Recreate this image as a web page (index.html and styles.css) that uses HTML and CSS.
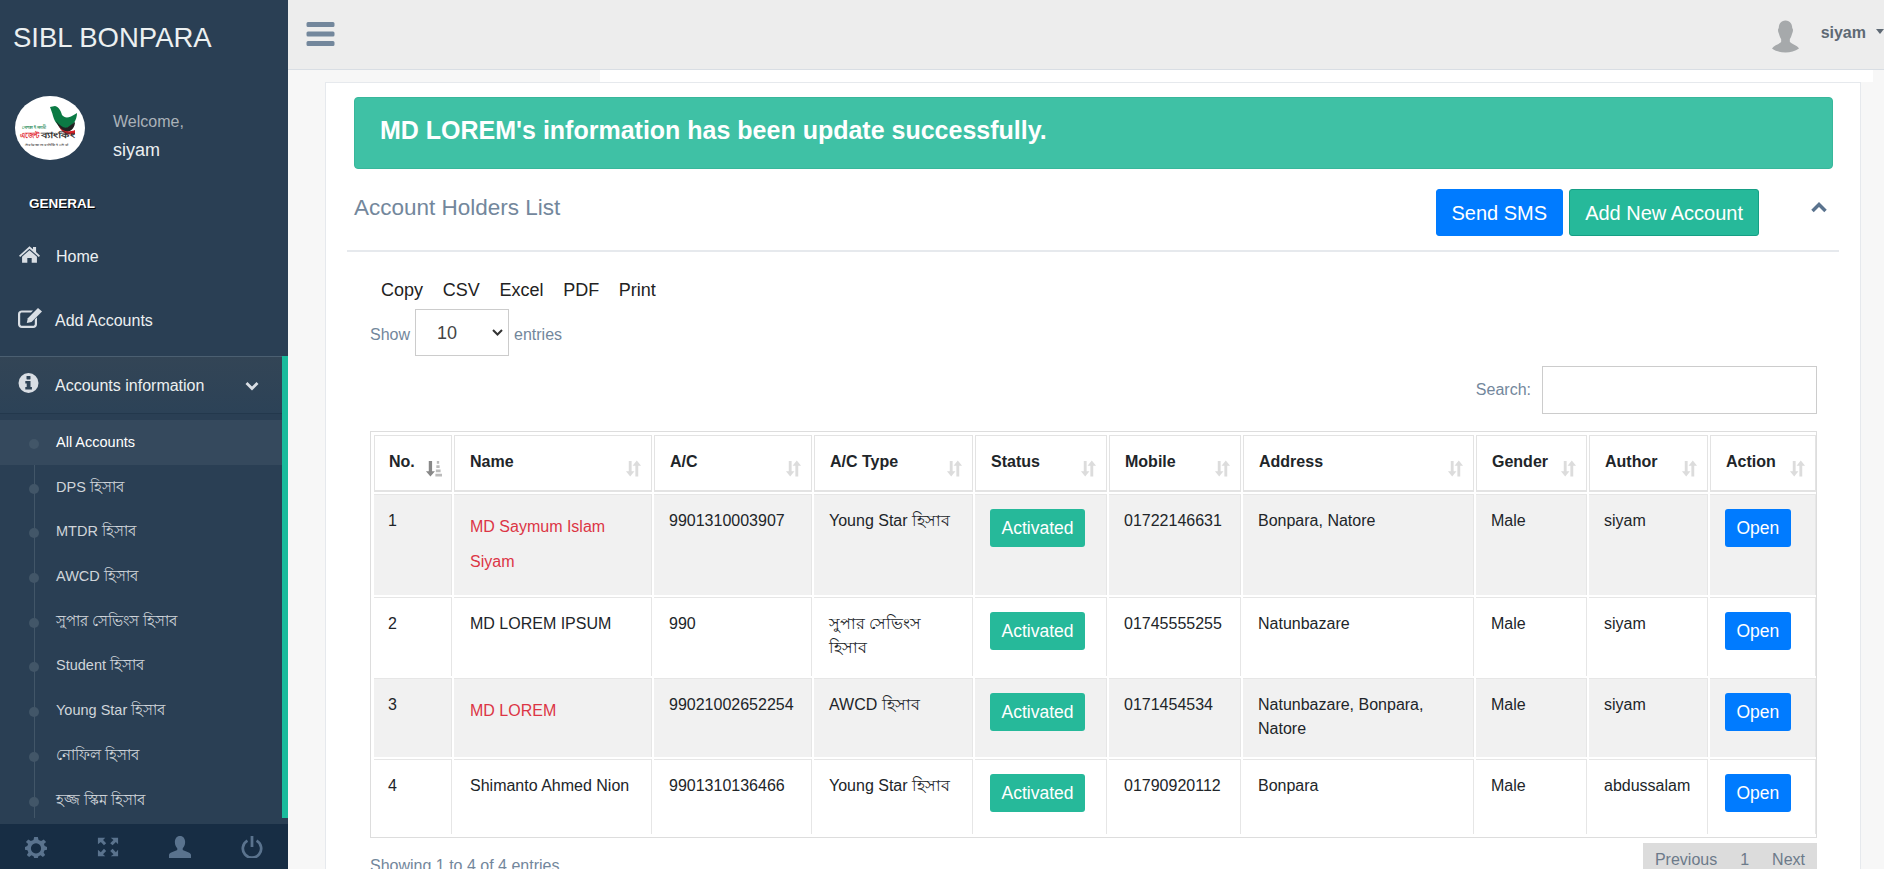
FILE: index.html
```html
<!DOCTYPE html>
<html lang="en">
<head>
    <meta charset="UTF-8">
    <meta name="viewport" content="width=device-width, initial-scale=1.0">
    <title>Account Holders List</title>
    <link rel="stylesheet" href="styles.css">
</head>
<body>

    <aside class="sidebar">
        <div class="brand">SIBL BONPARA</div>
        <div class="profile">
            <svg class="logo" viewBox="0 0 70 64">
                <ellipse cx="35" cy="32" rx="35" ry="32" fill="#fff"/>
                <path d="M35 11 L40 10 C44 11 46 15 47 19 C50 22 53 23 62 17 C62 24 58 30 52 32 C46 33 40 28 38 20 C37 16 36 14 35 11Z" fill="#0b7a44"/>
                <path d="M41 25 C46 31 50 33 53 31 L60 26 C60 31 57 35 52 36 C47 36 44 32 41 25Z" fill="#222"/>
                <path d="M44 30 C47 35 52 37 60 34 L60 38 C52 40 47 37 44 30Z" fill="#d32027"/>
                <text class="logo-top" x="7" y="33" textLength="24" lengthAdjust="spacingAndGlyphs">সোশ্যাল ইসলামী</text>
                <text class="logo-red" x="5" y="42" textLength="19" lengthAdjust="spacingAndGlyphs">এজেন্ট</text>
                <text class="logo-black" x="26" y="42" textLength="33" lengthAdjust="spacingAndGlyphs">ব্যাংকিং</text>
                <text class="logo-small" x="10" y="50" textLength="43" lengthAdjust="spacingAndGlyphs">সবার জন্য ব্যাংকিং সেবা</text>
            </svg>
            <div class="profile-info">
                <span class="welcome">Welcome,</span>
                <span class="profile-name">siyam</span>
            </div>
        </div>
        <h3 class="menu-title">GENERAL</h3>
        <a class="menu-item" href="#">
            <svg class="menu-icon" viewBox="0 0 24 20"><path d="M12 1 L16 4.6 V2 H19.5 V7.8 L24 12 L22.6 13.4 L12 3.9 L1.4 13.4 L0 12Z M12 5.6 L20.5 13 V20 H14.5 V14.5 H9.5 V20 H3.5 V13Z" fill="#d9dee4"/></svg>
            Home
        </a>
        <a class="menu-item add-item" href="#">
            <svg class="menu-icon wide" viewBox="0 0 24 20"><path d="M4 2.5 H15 L13 4.5 H4 C3 4.5 2.2 5.2 2.2 6.2 V16 C2.2 17 3 17.8 4 17.8 H15 C16 17.8 16.8 17 16.8 16 V11.5 L19 9.3 V16.2 C19 18.2 17.5 20 15.2 20 H3.8 C1.7 20 0 18.2 0 16.2 V6 C0 4 1.7 2.5 4 2.5Z" fill="#d9dee4"/><path d="M20 0 L24 3.6 L13.5 14 L8.8 15 L9.8 10.2Z" fill="#d9dee4"/></svg>
            Add Accounts
        </a>
        <div class="menu-section">
            <a class="section-head" href="#">
                <svg class="menu-icon" viewBox="0 0 20 20"><circle cx="10" cy="10" r="10" fill="#d9dee4"/><rect x="8" y="3" width="4" height="3.4" rx=".6" fill="#2f4356"/><path d="M6.8 8 H12 V14 H13.4 V16.6 H6.8 V14 H8.2 V10.6 H6.8Z" fill="#2f4356"/></svg>
                <span class="section-name">Accounts information</span>
                <svg class="section-chevron" viewBox="0 0 14 10"><path d="M1.5 2 L7 7.5 L12.5 2" fill="none" stroke="#d9dee4" stroke-width="2.8"/></svg>
            </a>
            <ul class="submenu">
                <li class="current"><a href="#">All Accounts</a></li>
                <li><a href="#">DPS হিসাব</a></li>
                <li><a href="#">MTDR হিসাব</a></li>
                <li><a href="#">AWCD হিসাব</a></li>
                <li><a href="#">সুপার সেভিংস হিসাব</a></li>
                <li><a href="#">Student হিসাব</a></li>
                <li><a href="#">Young Star হিসাব</a></li>
                <li><a href="#">নোফিল হিসাব</a></li>
                <li><a href="#">হজ্জ স্কিম হিসাব</a></li>
            </ul>
        </div>
        <div class="sidebar-footer">
            <svg viewBox="0 0 24 24"><path d="M10 1 H14 L14.8 4.3 L17.6 5.5 L20.5 3.7 L23 6.5 L20.6 8.8 L21.5 11 L24 12 V15 L21.3 15.6 L20.3 18 L22 20.6 L19.5 23 L17 21 L14.6 22 L14 24 H10 L9.3 22 L7 21 L4.5 23 L2 20.6 L3.7 18 L2.7 15.6 L0 15 V12 L2.5 11 L3.4 8.8 L1 6.5 L3.5 3.7 L6.4 5.5 L9.2 4.3Z M12 8 A5.5 5.5 0 1 0 12.01 8Z" fill="#5a738e" fill-rule="evenodd"/></svg>
            <svg viewBox="0 0 24 24"><path d="M1 2 H9 L6.6 4.4 L10 7.8 L7.6 10 L4.2 6.6 L1 9Z M23 2 V9 L20.6 6.6 L17 10 L14.4 7.8 L18 4.4 L15 2Z M1 22 V15 L4.2 17.6 L7.6 14 L10 16.4 L6.6 19.8 L9 22Z M23 22 H15 L18 19.8 L14.4 16.4 L17 14 L20.6 17.6 L23 15Z" fill="#5a738e"/></svg>
            <svg viewBox="0 0 24 24"><path d="M12 0 C15.6 0 17.6 3 17.6 6.6 C17.6 9.4 16.6 12 15 13.4 V15.4 C18 17 23 17.6 24 20.4 V24 H0 V20.4 C1 17.6 6 17 9 15.4 V13.4 C7.4 12 6.4 9.4 6.4 6.6 C6.4 3 8.4 0 12 0Z" fill="#5a738e"/></svg>
            <svg viewBox="0 0 24 24"><path d="M7 5 A10 10 0 1 0 17 5" fill="none" stroke="#5a738e" stroke-width="3"/><rect x="10.5" y="0" width="3" height="12" fill="#5a738e"/></svg>
        </div>
    </aside>

    <div class="main">
        <header class="topbar">
            <svg class="hamburger" viewBox="0 0 28 24"><path d="M1.5 0 H26.5 A1.5 1.5 0 0 1 28 1.5 V3.5 A1.5 1.5 0 0 1 26.5 5 H1.5 A1.5 1.5 0 0 1 0 3.5 V1.5 A1.5 1.5 0 0 1 1.5 0Z M1.5 9.5 H26.5 A1.5 1.5 0 0 1 28 11 V13 A1.5 1.5 0 0 1 26.5 14.5 H1.5 A1.5 1.5 0 0 1 0 13 V11 A1.5 1.5 0 0 1 1.5 9.5Z M1.5 19 H26.5 A1.5 1.5 0 0 1 28 20.5 V22.5 A1.5 1.5 0 0 1 26.5 24 H1.5 A1.5 1.5 0 0 1 0 22.5 V20.5 A1.5 1.5 0 0 1 1.5 19Z" fill="#73879c"/></svg>
            <div class="user-menu">
                <svg class="avatar" viewBox="0 0 28 33"><path d="M14 0 C19 0 21 4 21 8 C22 8.500 22 11 21 13 C20.400 15 19.500 18 18.500 19 V22 C20 24.500 26 25.500 28 29 C24 32 19 33 14 33 C9 33 4 32 0 29 C2 25.500 8 24.500 9.500 22 V19 C8.500 18 7.600 15 7 13 C6 11 6 8.500 7 8 C7 4 9 0 14 0Z" fill="#a6a9ab"/></svg>
                <span class="user-name">siyam</span>
                <span class="caret"></span>
            </div>
        </header>

        <div class="content">
            <section class="panel">
                <div class="alert">MD LOREM's information has been update successfully.</div>
                <div class="panel-title">
                    <h2>Account Holders List</h2>
                    <div class="title-actions">
                        <a class="btn btn-blue" href="#">Send SMS</a>
                        <a class="btn btn-green" href="#">Add New Account</a>
                    </div>
                    <svg class="collapse" viewBox="0 0 16 11"><path d="M1.500 9 L8 2.500 L14.500 9" fill="none" stroke="#5a738e" stroke-width="3.500"/></svg>
                </div>

                <div class="table-area">
                    <div class="export-buttons">
                        <a href="#">Copy</a>
                        <a href="#">CSV</a>
                        <a href="#">Excel</a>
                        <a href="#">PDF</a>
                        <a href="#">Print</a>
                    </div>
                    <div class="length-row">
                        <span>Show</span>
                        <select class="length-select"><option>10</option></select>
                        <span>entries</span>
                    </div>
                    <div class="search-row">
                        <label for="search">Search:</label>
                        <input type="text" id="search">
                    </div>

                    <div class="table-wrap">
                        <table class="accounts">
                            <thead>
                                <tr>
                                    <th class="col-no">No.<svg class="sort active" viewBox="0 0 18 18"><path d="M4 1 H7.500 V12 H10.500 L5.750 17.500 L1 12 H4Z" fill="#888"/><path d="M12.500 1 H15 V4 H12.500Z M12 5.500 H15.500 V8.500 H12Z M11.500 10 H16.500 V13 H11.500Z M11 14.500 H18 V17.500 H11Z" fill="#bbb"/></svg></th>
                                    <th class="col-name">Name<svg class="sort" viewBox="0 0 18 18"><path d="M4 1 H7 V12 H10 L5.500 17.500 L1 12 H4Z M11 17.500 H14 V6 H17 L12.500 .5 L8 6 H11Z" fill="#dcdcdc"/></svg></th>
                                    <th class="col-ac">A/C<svg class="sort" viewBox="0 0 18 18"><path d="M4 1 H7 V12 H10 L5.500 17.500 L1 12 H4Z M11 17.500 H14 V6 H17 L12.500 .5 L8 6 H11Z" fill="#dcdcdc"/></svg></th>
                                    <th class="col-type">A/C Type<svg class="sort" viewBox="0 0 18 18"><path d="M4 1 H7 V12 H10 L5.500 17.500 L1 12 H4Z M11 17.500 H14 V6 H17 L12.500 .5 L8 6 H11Z" fill="#dcdcdc"/></svg></th>
                                    <th class="col-status">Status<svg class="sort" viewBox="0 0 18 18"><path d="M4 1 H7 V12 H10 L5.500 17.500 L1 12 H4Z M11 17.500 H14 V6 H17 L12.500 .5 L8 6 H11Z" fill="#dcdcdc"/></svg></th>
                                    <th class="col-mobile">Mobile<svg class="sort" viewBox="0 0 18 18"><path d="M4 1 H7 V12 H10 L5.500 17.500 L1 12 H4Z M11 17.500 H14 V6 H17 L12.500 .5 L8 6 H11Z" fill="#dcdcdc"/></svg></th>
                                    <th class="col-address">Address<svg class="sort" viewBox="0 0 18 18"><path d="M4 1 H7 V12 H10 L5.500 17.500 L1 12 H4Z M11 17.500 H14 V6 H17 L12.500 .5 L8 6 H11Z" fill="#dcdcdc"/></svg></th>
                                    <th class="col-gender">Gender<svg class="sort" viewBox="0 0 18 18"><path d="M4 1 H7 V12 H10 L5.500 17.500 L1 12 H4Z M11 17.500 H14 V6 H17 L12.500 .5 L8 6 H11Z" fill="#dcdcdc"/></svg></th>
                                    <th class="col-author">Author<svg class="sort" viewBox="0 0 18 18"><path d="M4 1 H7 V12 H10 L5.500 17.500 L1 12 H4Z M11 17.500 H14 V6 H17 L12.500 .5 L8 6 H11Z" fill="#dcdcdc"/></svg></th>
                                    <th class="col-action">Action<svg class="sort" viewBox="0 0 18 18"><path d="M4 1 H7 V12 H10 L5.500 17.500 L1 12 H4Z M11 17.500 H14 V6 H17 L12.500 .5 L8 6 H11Z" fill="#dcdcdc"/></svg></th>
                                </tr>
                            </thead>
                            <tbody>
                                <tr class="odd row-one">
                                    <td>1</td>
                                    <td class="holder flagged">MD Saymum Islam Siyam</td>
                                    <td>9901310003907</td>
                                    <td>Young Star হিসাব</td>
                                    <td><a class="btn-small btn-green" href="#">Activated</a></td>
                                    <td>01722146631</td>
                                    <td>Bonpara, Natore</td>
                                    <td>Male</td>
                                    <td>siyam</td>
                                    <td><a class="btn-small btn-blue" href="#">Open</a></td>
                                </tr>
                                <tr class="row-two">
                                    <td>2</td>
                                    <td>MD LOREM IPSUM</td>
                                    <td>990</td>
                                    <td>সুপার সেভিংস হিসাব</td>
                                    <td><a class="btn-small btn-green" href="#">Activated</a></td>
                                    <td>01745555255</td>
                                    <td>Natunbazare</td>
                                    <td>Male</td>
                                    <td>siyam</td>
                                    <td><a class="btn-small btn-blue" href="#">Open</a></td>
                                </tr>
                                <tr class="odd row-two">
                                    <td>3</td>
                                    <td class="holder flagged">MD LOREM</td>
                                    <td>99021002652254</td>
                                    <td>AWCD হিসাব</td>
                                    <td><a class="btn-small btn-green" href="#">Activated</a></td>
                                    <td>0171454534</td>
                                    <td>Natunbazare, Bonpara, Natore</td>
                                    <td>Male</td>
                                    <td>siyam</td>
                                    <td><a class="btn-small btn-blue" href="#">Open</a></td>
                                </tr>
                                <tr class="row-four">
                                    <td>4</td>
                                    <td>Shimanto Ahmed Nion</td>
                                    <td>9901310136466</td>
                                    <td>Young Star হিসাব</td>
                                    <td><a class="btn-small btn-green" href="#">Activated</a></td>
                                    <td>01790920112</td>
                                    <td>Bonpara</td>
                                    <td>Male</td>
                                    <td>abdussalam</td>
                                    <td><a class="btn-small btn-blue" href="#">Open</a></td>
                                </tr>
                            </tbody>
                        </table>
                    </div>

                    <div class="table-footer">
                        <span class="table-info">Showing 1 to 4 of 4 entries</span>
                        <div class="pager">
                            <a href="#">Previous</a>
                            <a href="#">1</a>
                            <a href="#">Next</a>
                        </div>
                    </div>
                </div>
            </section>
        </div>
    </div>

</body>
</html>
```

FILE: styles.css
```css
* {
  margin: 0;
  padding: 0;
  box-sizing: border-box;
}

html, body {
  height: 100%;
  overflow: hidden;
}

body {
  display: flex;
  background: #f7f7f7;
  font-family: "Liberation Sans", "Noto Sans", sans-serif;
  font-size: 16px;
  color: #212529;
}

a {
  text-decoration: none;
  color: inherit;
}

/* sidebar */
.sidebar {
  width: 288px;
  flex-shrink: 0;
  height: 869px;
  display: flex;
  flex-direction: column;
  background: #2a3f54;
  color: #ecf0f1;
}

.brand {
  font-size: 27.5px;
  line-height: 37px;
  padding: 19px 0 0 13px;
  height: 96px;
}

.profile {
  display: flex;
  align-items: center;
  height: 64px;
  padding-left: 15px;
}

.logo {
  width: 70px;
  height: 64px;
  flex-shrink: 0;
}

.logo text {
  font-family: "Noto Sans", sans-serif;
  font-weight: bold;
}

.logo-top {
  font-size: 5px;
  fill: #1b8a55;
}

.logo-red {
  font-size: 8px;
  fill: #e2272e;
}

.logo-black {
  font-size: 8px;
  fill: #333;
}

.logo-small {
  font-size: 4px;
  fill: #666;
}

.profile-info {
  display: flex;
  flex-direction: column;
  margin-left: 28px;
  margin-top: 25px;
}

.welcome {
  font-size: 16px;
  line-height: 20px;
  color: #aab2b9;
}

.profile-name {
  font-size: 18px;
  line-height: 37px;
  color: #ecf0f1;
}

.menu-title {
  font-size: 13.5px;
  line-height: 18px;
  font-weight: bold;
  color: #fff;
  text-shadow: 1px 1px #000;
  padding-left: 29px;
  margin-top: 35px;
}

.menu-item {
  display: flex;
  align-items: center;
  height: 64px;
  padding: 2px 0 0 19px;
  margin-top: 11px;
  gap: 16px;
}

.add-item {
  margin-top: 0;
  gap: 13px;
  padding-left: 18px;
}

.menu-icon {
  width: 21px;
  height: 20px;
  flex-shrink: 0;
  margin-top: -7px;
}

.menu-icon.wide {
  width: 24px;
}

.menu-section {
  border-right: 6px solid #1abb9c;
  margin-top: 4px;
  height: 462px;
}

.section-head {
  display: flex;
  align-items: center;
  height: 58px;
  padding: 2px 0 0 18px;
  border-top: 1px solid #4b5f71;
  border-bottom: 1px solid #23384c;
  background: linear-gradient(#334556, #2c4257);
}

.section-name {
  margin-left: 16px;
  width: 190px;
}

.section-chevron {
  width: 14px;
  height: 10px;
}

.submenu {
  list-style: none;
  margin-top: 6px;
  position: relative;
}

.submenu::before {
  content: "";
  position: absolute;
  left: 33.5px;
  top: 0;
  height: 398px;
  width: 1px;
  background: #425668;
}

.submenu li {
  height: 44.7px;
  position: relative;
  padding-left: 56px;
  font-size: 14.5px;
  line-height: 44px;
  color: #d0d5da;
}

.submenu li::before {
  content: "";
  position: absolute;
  left: 29px;
  top: 19px;
  width: 10px;
  height: 10px;
  border-radius: 50%;
  background: #425668;
}

.submenu li.current {
  background: #35495d;
  color: #fff;
}

.sidebar-footer {
  margin-top: auto;
  height: 45px;
  background: #172d44;
  display: grid;
  grid-template-columns: repeat(4, 72px);
  justify-items: center;
  align-items: center;
}

.sidebar-footer svg {
  width: 22px;
  height: 22px;
}

/* top bar */
.main {
  flex: 1;
  min-width: 0;
  height: 869px;
  display: flex;
  flex-direction: column;
}

.topbar {
  height: 70px;
  flex-shrink: 0;
  display: flex;
  align-items: center;
  justify-content: space-between;
  background: #ededed;
  border-bottom: 1px solid #d9dee4;
  padding-left: 18px;
}

.hamburger {
  width: 29px;
  height: 24px;
  margin-top: -2px;
}

.user-menu {
  display: flex;
  align-items: center;
}

.avatar {
  width: 27px;
  height: 33px;
  margin-top: 4px;
}

.user-name {
  margin-left: 22px;
  font-weight: bold;
  font-size: 16px;
  color: #5e6974;
  margin-top: -4px;
  margin-right: 10px;
}

.caret {
  border-top: 5px solid #5e6974;
  border-left: 4.5px solid transparent;
  border-right: 4.5px solid transparent;
  margin-top: -6px;
}

/* content panel */
.content {
  flex: 1;
  min-height: 0;
  padding: 12px 23px 0 37px;
  background: #f7f7f7 linear-gradient(#fff, #fff) no-repeat 312px 0 / 1273px 12px;
}

.panel {
  background: #fff;
  border: 1px solid #e6e9ed;
  height: 900px;
  padding: 14px 27px 0 28px;
}

.alert {
  height: 72px;
  line-height: 64px;
  padding-left: 25px;
  background: #3fc1a5;
  border: 1px solid #38b79b;
  border-radius: 4px;
  color: #fff;
  font-weight: bold;
  font-size: 25px;
}

.panel-title {
  display: flex;
  align-items: flex-start;
  height: 83px;
  margin: 0 -6px 0 -7px;
  padding: 20px 0 0 7px;
  border-bottom: 2px solid #e6e9ed;
}

.panel-title h2 {
  font-weight: normal;
  font-size: 22.5px;
  line-height: 38px;
  color: #73879c;
}

.title-actions {
  display: flex;
  gap: 6px;
  margin-left: auto;
  margin-right: 52px;
}

.btn {
  height: 47px;
  line-height: 47px;
  font-size: 20px;
  padding: 0 15px;
  border-radius: 3px;
  color: #fff;
  border: 1px solid transparent;
}

.btn-blue {
  background: #007bff;
  border-color: #007bff;
}

.btn-green {
  background: #26b99a;
  border-color: #169f85;
}

.collapse {
  width: 16px;
  height: 11px;
  margin: 13px 12px 0 0;
}

/* table tools */
.table-area {
  padding: 0 16px 0 16px;
}

.export-buttons {
  display: flex;
  gap: 19.7px;
  padding: 27px 0 0 11px;
  font-size: 18px;
  line-height: 22px;
  color: #222;
}

.length-row {
  display: flex;
  align-items: center;
  gap: 5px;
  font-size: 16px;
  color: #73879c;
  margin-top: 8px;
  height: 47px;
}

.length-row span {
  padding-top: 4px;
}

.length-select {
  appearance: none;
  width: 94px;
  height: 47px;
  padding-left: 21px;
  background: #fff url("data:image/svg+xml,%3Csvg xmlns='http://www.w3.org/2000/svg' width='11' height='7'%3E%3Cpath d='M1 1l4.500 4.500L10 1' fill='none' stroke='%23333' stroke-width='2'/%3E%3C/svg%3E") no-repeat 76px center;
  border: 1px solid #ccc;
  font: 18px "Liberation Sans", sans-serif;
  color: #444;
}

.search-row {
  display: flex;
  justify-content: flex-end;
  align-items: center;
  gap: 11px;
  height: 48px;
  margin-top: 10px;
  font-size: 16px;
  color: #73879c;
}

.search-row input {
  width: 275px;
  height: 48px;
  border: 1px solid #ccc;
}

/* accounts table */
.table-wrap {
  margin-top: 17px;
  border: 1px solid #ddd;
  padding: 1px;
}

.accounts {
  width: 100%;
  table-layout: fixed;
  border-collapse: separate;
  border-spacing: 2px;
  font-size: 16px;
}

.accounts th {
  position: relative;
  height: 57px;
  text-align: left;
  font-weight: bold;
  padding: 0 0 2px 15px;
  border: 1px solid #e3e3e3;
  border-bottom-width: 2px;
  color: #212529;
}

.accounts td {
  vertical-align: top;
  padding: 14px 12px 0 15px;
  line-height: 24px;
  border-top: 1px solid #e6e6e6;
  border-right: 1px solid #e6e6e6;
}

.accounts th:first-child, .accounts td:first-child {
  padding-left: 14px;
}

.accounts td:nth-child(2) {
  padding-left: 16px;
}

.col-no { width: 78px; }
.col-name { width: 198px; }
.col-ac { width: 158px; }
.col-type { width: 159px; }
.col-status { width: 132px; }
.col-mobile { width: 132px; }
.col-address { width: 231px; }
.col-gender { width: 111px; }
.col-author { width: 119px; }
.col-action { width: 106px; }

.sort {
  position: absolute;
  right: 9px;
  top: 24px;
  width: 17px;
  height: 17px;
}

.odd td {
  background: #f1f1f1;
}

.row-one td { height: 101px; }
.row-two td { height: 79px; }
.row-four td { height: 75px; }

.accounts td.holder {
  line-height: 35px;
  padding-top: 14px;
}

.flagged {
  color: #dc3545;
}

.btn-small {
  display: inline-block;
  height: 38px;
  line-height: 36px;
  padding: 0 10.5px;
  font-size: 17.5px;
  border-radius: 3px;
  color: #fff;
  border: 1px solid transparent;
}

.table-footer {
  display: flex;
  justify-content: space-between;
  align-items: flex-start;
}

.table-info {
  margin-top: 19px;
  color: #73879c;
}

.pager {
  display: flex;
  gap: 23px;
  background: #dcdcdc;
  padding: 8px 12px 0;
  height: 34px;
  margin-top: 5px;
  color: #6c7a8a;
}
```
